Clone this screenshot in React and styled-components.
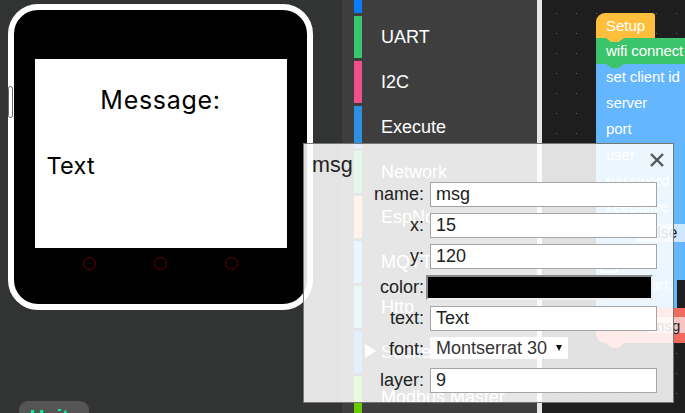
import React from 'react';
import styled, { createGlobalStyle } from 'styled-components';

const GlobalStyle = createGlobalStyle`
  html, body {
    margin: 0;
    padding: 0;
    background: #323433;
    font-family: "Liberation Sans", Arial, sans-serif;
  }
`;

const Page = styled.div`
  position: relative;
  width: 685px;
  height: 413px;
  display: flex;
  overflow: hidden;
`;

// left pane with the device preview
const DevicePane = styled.div`
  width: 342px;
  flex: none;
  background: #323433;
  display: flex;
  flex-direction: column;
  align-items: flex-start;
  padding: 4px 0 0 8px;
  box-sizing: border-box;
`;

const Device = styled.div`
  position: relative;
  width: 305px;
  height: 306px;
  flex: none;
  box-sizing: border-box;
  background: #000;
  border: 6px solid #fff;
  border-radius: 30px;
  display: flex;
  flex-direction: column;
  align-items: center;
  padding-top: 49px;
`;

const SideButton = styled.div`
  position: absolute;
  left: -6px;
  top: 76px;
  width: 5px;
  height: 32px;
  box-sizing: border-box;
  background: #fff;
  border: 1px solid #666;
  border-radius: 3px;
`;

const Screen = styled.div`
  width: 252px;
  height: 189px;
  flex: none;
  background: #fff;
  color: #000;
  font-family: Inter, "Noto Sans", sans-serif;
  display: flex;
  flex-direction: column;
`;

const ScreenTitle = styled.div`
  font-size: 25px;
  letter-spacing: 0.7px;
  line-height: 30px;
  text-align: center;
  margin-top: 26px;
`;

const ScreenText = styled.div`
  font-size: 23.5px;
  letter-spacing: 0.25px;
  line-height: 30px;
  margin: 36px 0 0 12px;
`;

const ButtonRow = styled.div`
  display: flex;
  gap: 58px;
  margin-top: 9px;
`;

const RoundButton = styled.div`
  width: 13px;
  height: 13px;
  box-sizing: border-box;
  border: 1px solid #6b0000;
  border-radius: 50%;
`;

const UnitsTab = styled.div`
  margin: 91px 0 0 11px;
  width: 70px;
  height: 40px;
  flex: none;
  background: #555;
  border-radius: 9px 9px 0 0;
  color: #00f59b;
  font-size: 20px;
  font-weight: 700;
  line-height: 24px;
  padding: 4px 0 0 11px;
  box-sizing: border-box;
`;

// category sidebar
const Sidebar = styled.div`
  width: 195px;
  flex: none;
  background: #3e3e3e;
  display: flex;
  flex-direction: column;
  gap: 3px;
  padding: 0 0 0 12px;
  box-sizing: border-box;
  overflow: hidden;
`;

const Category = styled.div`
  position: relative;
  flex: none;
  height: 42px;
  display: flex;
  align-items: center;
  color: #fff;
  font-size: 18px;
  margin-top: ${(p) => (p.$first ? '-29px' : '0')};

  &::before {
    content: '';
    width: 8px;
    height: 100%;
    background: ${(p) => p.$color};
    margin-right: 19px;
  }
`;

const Arrow = styled.div`
  position: absolute;
  left: 11px;
  top: 13px;
  width: 0;
  height: 0;
  border-left: 11px solid #fff;
  border-top: 7px solid transparent;
  border-bottom: 7px solid transparent;
`;

const Divider = styled.div`
  width: 5px;
  flex: none;
  background: #e6e6e6;
`;

// block workspace with dot grid
const Workspace = styled.div`
  flex: 1;
  min-width: 0;
  background-color: #1e1e1e;
  background-image: radial-gradient(circle at 14.5px 13.5px, #666 0.5px, transparent 0.9px);
  background-size: 20px 20px;
  padding: 13px 0 0 54px;
  box-sizing: border-box;
  overflow: hidden;
  color: #fff;
  font-size: 15px;
  display: flex;
  flex-direction: column;
  align-items: flex-start;
`;

const HatBlock = styled.div`
  position: relative;
  z-index: 2;
  width: 59px;
  height: 25px;
  flex: none;
  box-sizing: border-box;
  padding-left: 10px;
  line-height: 25px;
  background: #ffbf3c;
  border-radius: 9px 3px 0 0;

  &::after {
    content: '';
    position: absolute;
    left: 10px;
    bottom: -4px;
    width: 18px;
    height: 4px;
    background: #ffbf3c;
    clip-path: polygon(0 0, 100% 0, 70% 100%, 30% 100%);
  }
`;

const GreenBlock = styled.div`
  position: relative;
  z-index: 1;
  width: 95px;
  height: 26px;
  flex: none;
  box-sizing: border-box;
  padding-left: 10px;
  line-height: 25px;
  background: #3cc46c;
  white-space: nowrap;
  letter-spacing: -0.1px;

  &::after {
    content: '';
    position: absolute;
    left: 10px;
    bottom: -4px;
    width: 18px;
    height: 4px;
    background: #3cc46c;
    clip-path: polygon(0 0, 100% 0, 70% 100%, 30% 100%);
  }
`;

const BlueBlock = styled.div`
  width: 95px;
  height: 216px;
  flex: none;
  box-sizing: border-box;
  background: #64b6ff;
  padding-left: 10px;
  white-space: nowrap;
  letter-spacing: -0.1px;
`;

const BlueRow = styled.div`
  height: 26px;
  line-height: 26px;
  display: flex;
`;

const FalseField = styled.span`
  height: 18px;
  line-height: 18px;
  margin: 4px 0 0 30px;
  padding-left: 8px;
  width: 54px;
  flex: none;
  border-radius: 3px;
  background: #cfe7ff;
  color: #222;
  font-size: 16px;
`;

const BoxField = styled.span`
  width: 17px;
  height: 18px;
  margin: 9px 0 0 -6px;
  box-sizing: border-box;
  border: 2px solid #fff;
  border-radius: 2px;
`;

const BlueFoot = styled.div`
  width: 81px;
  height: 28px;
  flex: none;
  box-sizing: border-box;
  background: #64b6ff;
  padding-left: 10px;
  line-height: 10px;
  white-space: nowrap;
`;

const RedBlock = styled.div`
  position: relative;
  width: 95px;
  height: 35px;
  flex: none;
  box-sizing: border-box;
  background: #ef6b5b;
  border-radius: 0 0 0 9px;
  display: flex;
  justify-content: flex-end;

  &::after {
    content: '';
    position: absolute;
    left: 10px;
    bottom: -5px;
    width: 18px;
    height: 5px;
    background: #ef6b5b;
    clip-path: polygon(0 0, 100% 0, 70% 100%, 30% 100%);
  }
`;

const MsgField = styled.span`
  height: 16px;
  line-height: 18px;
  width: 44px;
  margin-top: 9px;
  padding-left: 5px;
  box-sizing: border-box;
  background: #f9c4bd;
  border-radius: 3px 0 0 3px;
  color: #222;
`;

// properties dialog over everything
const Dialog = styled.div`
  position: absolute;
  left: 303px;
  top: 143px;
  width: 371px;
  height: 260px;
  box-sizing: border-box;
  background: rgba(255, 255, 255, 0.87);
  border: 1px solid #777;
  color: #222;
  font-size: 18px;
  display: flex;
  flex-direction: column;
`;

const DialogHead = styled.div`
  position: relative;
  height: 38px;
  flex: none;
  padding-left: 8px;
  font-size: 21.5px;
  line-height: 42px;
`;

const CloseIcon = styled.svg`
  position: absolute;
  right: 8px;
  top: 8px;
  width: 16px;
  height: 16px;
`;

const Form = styled.div`
  display: grid;
  grid-template-columns: 120px 1fr;
  grid-auto-rows: 25px;
  row-gap: 6px;
`;

const Label = styled.label`
  text-align: right;
  line-height: 25px;
`;

const Input = styled.input`
  margin-left: 6px;
  width: 227px;
  height: 25px;
  box-sizing: border-box;
  border: 1px solid #a5a5a5;
  background: #fff;
  padding: 0 5px;
  font: inherit;
  color: #222;
  outline: none;
`;

const ColorSwatch = styled.div`
  margin-left: 2px;
  width: 227px;
  height: 25px;
  box-sizing: border-box;
  background: #000;
  border: 2px solid;
  border-color: #8a8a8a #efefef #efefef #8a8a8a;
`;

const FontSelect = styled.div`
  margin-left: 6px;
  width: 138px;
  height: 22px;
  background: #fff;
  display: flex;
  align-items: center;
  justify-content: space-between;
  padding: 0 6px;
  box-sizing: border-box;
  color: #333;
  line-height: 22px;
  white-space: nowrap;
  align-self: start;

  &::after {
    content: '';
    border-top: 6px solid #111;
    border-left: 3px solid transparent;
    border-right: 3px solid transparent;
  }
`;

const categories = [
  { name: '', color: '#0a7cff' },
  { name: 'UART', color: '#3cc76f' },
  { name: 'I2C', color: '#f0508c' },
  { name: 'Execute', color: '#2f8fe0' },
  { name: 'Network', color: '#3cc76f' },
  { name: 'EspNow', color: '#f7a877' },
  { name: 'MQTT', color: '#5fb0ff' },
  { name: 'Http', color: '#5cc8c0' },
  { name: 'Socket', color: '#3296f0', open: true },
  { name: 'Modbus Master', color: '#66cc00' },
];

const fields = [
  { label: 'name:', value: 'msg' },
  { label: 'x:', value: '15' },
  { label: 'y:', value: '120' },
];

const App = () => (
  <Page>
    <GlobalStyle />
    <DevicePane>
      <Device>
        <SideButton />
        <Screen>
          <ScreenTitle>Message:</ScreenTitle>
          <ScreenText>Text</ScreenText>
        </Screen>
        <ButtonRow>
          <RoundButton />
          <RoundButton />
          <RoundButton />
        </ButtonRow>
      </Device>
      <UnitsTab>Units</UnitsTab>
    </DevicePane>

    <Sidebar>
      {categories.map((c, i) => (
        <Category key={i} $color={c.color} $first={i === 0}>
          {c.open && <Arrow />}
          <span>{c.name}</span>
        </Category>
      ))}
    </Sidebar>
    <Divider />

    <Workspace>
      <HatBlock>Setup</HatBlock>
      <GreenBlock>wifi connect</GreenBlock>
      <BlueBlock>
        <BlueRow>set client id</BlueRow>
        <BlueRow>server</BlueRow>
        <BlueRow>port</BlueRow>
        <BlueRow>user</BlueRow>
        <BlueRow>password</BlueRow>
        <BlueRow>keepalive</BlueRow>
        <BlueRow>
          <FalseField>false</FalseField>
        </BlueRow>
        <BlueRow>
          <BoxField />
        </BlueRow>
      </BlueBlock>
      <BlueFoot>mqtt start</BlueFoot>
      <RedBlock>
        <MsgField>msg</MsgField>
      </RedBlock>
    </Workspace>

    <Dialog>
      <DialogHead>
        msg
        <CloseIcon viewBox="0 0 16 16">
          <path d="M2 2 L14 14 M14 2 L2 14" stroke="#555" strokeWidth="2.4" fill="none" />
        </CloseIcon>
      </DialogHead>
      <Form>
        {fields.map((f) => (
          <React.Fragment key={f.label}>
            <Label>{f.label}</Label>
            <Input defaultValue={f.value} />
          </React.Fragment>
        ))}
        <Label>color:</Label>
        <ColorSwatch />
        <Label>text:</Label>
        <Input defaultValue="Text" />
        <Label>font:</Label>
        <FontSelect>Montserrat 30</FontSelect>
        <Label>layer:</Label>
        <Input defaultValue="9" />
      </Form>
    </Dialog>
  </Page>
);

export default App;
